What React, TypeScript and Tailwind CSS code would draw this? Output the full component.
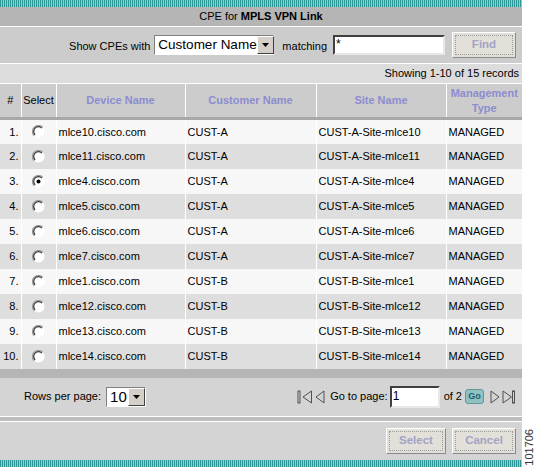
import React from "react";

const rows = [
  ["mlce10.cisco.com", "CUST-A", "CUST-A-Site-mlce10"],
  ["mlce11.cisco.com", "CUST-A", "CUST-A-Site-mlce11"],
  ["mlce4.cisco.com", "CUST-A", "CUST-A-Site-mlce4"],
  ["mlce5.cisco.com", "CUST-A", "CUST-A-Site-mlce5"],
  ["mlce6.cisco.com", "CUST-A", "CUST-A-Site-mlce6"],
  ["mlce7.cisco.com", "CUST-A", "CUST-A-Site-mlce7"],
  ["mlce1.cisco.com", "CUST-B", "CUST-B-Site-mlce1"],
  ["mlce12.cisco.com", "CUST-B", "CUST-B-Site-mlce12"],
  ["mlce13.cisco.com", "CUST-B", "CUST-B-Site-mlce13"],
  ["mlce14.cisco.com", "CUST-B", "CUST-B-Site-mlce14"],
];

function Radio({ checked }: { checked?: boolean }) {
  return (
    <svg width="13" height="13" viewBox="0 0 13 13" className="block">
      <circle cx="6.5" cy="6.5" r="6" fill="#ffffff" />
      <path d="M2.2 10.8 A6 6 0 0 1 10.8 2.2" fill="none" stroke="#9a9a9a" strokeWidth="1.2" />
      <path d="M3.1 9.9 A4.8 4.8 0 0 1 9.9 3.1" fill="none" stroke="#303030" strokeWidth="1.2" />
      {checked && <circle cx="6.5" cy="6.5" r="2" fill="#000" />}
    </svg>
  );
}

function Stripe() {
  return (
    <div className="h-[7px] bg-[repeating-linear-gradient(90deg,#2b9494_0px,#2b9494_1px,#8fd2d2_1px,#8fd2d2_2px)]" />
  );
}

function DropArrow() {
  return (
    <div className="w-[17px] h-full shrink-0 bg-[#d4d0c8] border border-t-white border-l-white border-r-[#404040] border-b-[#404040] flex items-center justify-center">
      <svg width="7" height="4" viewBox="0 0 7 4">
        <path d="M0 0 H7 L3.5 4 Z" fill="#000" />
      </svg>
    </div>
  );
}

function NavIcon({ kind }: { kind: "first" | "prev" | "next" | "last" }) {
  const stroke = "#505050";
  if (kind === "first")
    return (
      <svg width="16" height="14" viewBox="0 0 16 14" className="block">
        <rect x="1" y="1" width="2" height="12" fill="none" stroke={stroke} strokeWidth="1" />
        <path d="M14.5 1 L6 7 L14.5 13 Z" fill="none" stroke={stroke} strokeWidth="1" />
      </svg>
    );
  if (kind === "prev")
    return (
      <svg width="10" height="14" viewBox="0 0 10 14" className="block">
        <path d="M9 1 L1 7 L9 13 Z" fill="none" stroke={stroke} strokeWidth="1" />
      </svg>
    );
  if (kind === "next")
    return (
      <svg width="10" height="14" viewBox="0 0 10 14" className="block">
        <path d="M1 1 L9 7 L1 13 Z" fill="none" stroke={stroke} strokeWidth="1" />
      </svg>
    );
  return (
    <svg width="14" height="14" viewBox="0 0 14 14" className="block">
      <path d="M1 1 L9.5 7 L1 13 Z" fill="none" stroke={stroke} strokeWidth="1" />
      <rect x="10.5" y="1" width="2" height="12" fill="none" stroke={stroke} strokeWidth="1" />
    </svg>
  );
}

function GrayButton({ label, w }: { label: string; w: string }) {
  return (
    <div className={`${w} h-[26px] bg-[#e2e0d8] border border-t-white border-l-white border-r-[#8a8a8a] border-b-[#8a8a8a] p-[2px]`}>
      <div className="w-full h-full border border-dotted border-[#9a9a9a] flex items-center justify-center text-[11.5px] font-bold text-[#a3a3c6]">
        {label}
      </div>
    </div>
  );
}

export default function App() {
  return (
    <div className="w-[536px] h-[467px] bg-white flex font-['Liberation_Sans',Arial,sans-serif] text-black overflow-hidden text-[11px]">
      <div className="w-[522px] flex flex-col">
        <Stripe />
        <div className="h-[19px] bg-[#b5b5b5] flex items-center justify-center text-[11px]">
          <span>
            CPE for <b>MPLS VPN Link</b>
          </span>
        </div>
        <div className="h-px bg-white" />
        <div className="h-[36px] bg-[#cccccc] flex items-center justify-end pr-[6px] text-[11px] whitespace-nowrap">
          <span className="mr-[4px] mt-[3px]">Show CPEs with</span>
          <div className="w-[120px] h-[20px] bg-white border border-t-[#808080] border-l-[#808080] border-r-white border-b-white flex items-center">
            <span className="flex-1 pl-[3px] text-[13.5px] leading-none">Customer Name</span>
            <DropArrow />
          </div>
          <span className="ml-[8px] mr-[6px] mt-[3px]">matching</span>
          <div className="w-[112px] h-[20px] bg-white border-2 border-t-[#404040] border-l-[#404040] border-r-[#e8e8e8] border-b-[#e8e8e8] text-[12px] leading-[14px] pl-[1px]">
            *
          </div>
          <div className="ml-[7px]">
            <GrayButton label="Find" w="w-[64px]" />
          </div>
        </div>
        <div className="h-px bg-white" />
        <div className="h-[19px] bg-[#dcdcdc] flex items-center justify-end pr-[3px] text-[11px]">
          Showing 1-10 of 15 records
        </div>
        <table className="w-[522px] border-collapse table-fixed text-[11px]">
          <colgroup>
            <col className="w-[21px]" />
            <col className="w-[35px]" />
            <col className="w-[129px]" />
            <col className="w-[131px]" />
            <col className="w-[130px]" />
            <col className="w-[76px]" />
          </colgroup>
          <thead>
            <tr className="h-[35px] bg-[#cccccc] border-t border-white border-b-[3px] border-b-[#a8a8a8]">
              <th className="font-normal text-[11px] border-r border-white">#</th>
              <th className="font-normal text-[11px] border-r border-white">Select</th>
              <th className="font-bold text-[11px] text-[#8c8cd0] border-r border-white">Device Name</th>
              <th className="font-bold text-[11px] text-[#8c8cd0] border-r border-white">Customer Name</th>
              <th className="font-bold text-[11px] text-[#8c8cd0] border-r border-white">Site Name</th>
              <th className="font-bold text-[11px] leading-[15px] text-[#8c8cd0]">
                Management
                <br />
                Type
              </th>
            </tr>
          </thead>
          <tbody>
            {rows.map((r, i) => (
              <tr key={i} className={`h-[25px] ${i % 2 === 0 ? "bg-[#f7f7f7]" : "bg-[#dedede]"}`}>
                <td className="text-right pr-[2px] border-r border-white">{i + 1}.</td>
                <td className="border-r border-white">
                  <div className="flex justify-center">
                    <Radio checked={i === 2} />
                  </div>
                </td>
                <td className="pl-[2px] border-r border-white">{r[0]}</td>
                <td className="pl-[2px] border-r border-white">{r[1]}</td>
                <td className="pl-[2px] border-r border-white">{r[2]}</td>
                <td className="pl-[2px]">MANAGED</td>
              </tr>
            ))}
          </tbody>
        </table>
        <div className="h-[9px] bg-[#b5b5b5]" />
        <div className="h-[38px] bg-[#d4d4d4] flex items-center pl-[24px] pr-[6px] text-[11px] whitespace-nowrap">
          <span className="mr-[5px]">Rows per page:</span>
          <div className="w-[40px] h-[20px] bg-white border border-t-[#808080] border-l-[#808080] border-r-white border-b-white flex items-center">
            <span className="flex-1 pl-[3px] text-[15px] leading-none">10</span>
            <DropArrow />
          </div>
          <div className="flex-1" />
          <NavIcon kind="first" />
          <div className="ml-[2px]"><NavIcon kind="prev" /></div>
          <span className="ml-[5px] mr-[2px]">Go to page:</span>
          <div className="w-[50px] h-[22px] bg-white border-2 border-t-[#404040] border-l-[#404040] border-r-[#e8e8e8] border-b-[#e8e8e8] text-[12px] leading-[16px] pl-[1px]">
            1
          </div>
          <span className="ml-[4px] mr-[3px]">of 2</span>
          <div className="w-[19px] h-[15px] rounded-[3px] bg-[#8fc1c1] border border-[#5f9a9a] flex items-center justify-center text-[9px] font-bold text-[#225f6f]">
            Go
          </div>
          <div className="ml-[6px]"><NavIcon kind="next" /></div>
          <div className="ml-[2px]"><NavIcon kind="last" /></div>
        </div>
        <div className="h-px bg-white" />
        <div className="h-[4px] bg-[#bdbdbd]" />
        <div className="h-px bg-white" />
        <div className="flex-1 bg-[#d4d4d4] flex items-center justify-end pr-[6px] gap-[6px]">
          <GrayButton label="Select" w="w-[60px]" />
          <GrayButton label="Cancel" w="w-[64px]" />
        </div>
        <Stripe />
      </div>
      <div className="flex-1 flex flex-col justify-end items-center pb-[1px]">
        <div className="[writing-mode:vertical-rl] rotate-180 text-[11px] leading-none text-[#333]">101706</div>
      </div>
    </div>
  );
}
